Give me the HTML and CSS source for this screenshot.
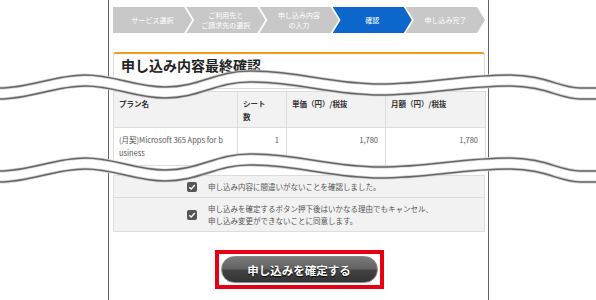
FILE: index.html
```html
<!DOCTYPE html>
<html lang="ja">
<head>
    <meta charset="UTF-8">
    <meta name="viewport" content="width=device-width, initial-scale=1.0">
    <title>申し込み内容最終確認</title>
    <link rel="stylesheet" href="styles.css">
</head>
<body>
    <div class="page">
        <ol class="steps">
            <li class="step">サービス選択</li>
            <li class="step">ご利用先と<br>ご請求先の選択</li>
            <li class="step">申し込み内容<br>の入力</li>
            <li class="step current">確認</li>
            <li class="step">申し込み完了</li>
        </ol>

        <div class="card">
            <h2>申し込み内容最終確認</h2>
        </div>

        <table class="plan-table">
            <colgroup>
                <col class="col-name">
                <col class="col-seat">
                <col class="col-price">
                <col class="col-month">
            </colgroup>
            <thead>
                <tr>
                    <th>プラン名</th>
                    <th>シート<br>数</th>
                    <th>単価（円）/税抜</th>
                    <th>月額（円）/税抜</th>
                </tr>
            </thead>
            <tbody>
                <tr>
                    <td class="name">(月契)Microsoft 365 Apps for business</td>
                    <td class="num">1</td>
                    <td class="num">1,780</td>
                    <td class="num">1,780</td>
                </tr>
            </tbody>
        </table>

        <div class="agree">
            <label class="agree-row">
                <span class="check"><svg viewBox="0 0 10 10"><path d="M2.3 5.2 L4.2 7.1 L7.8 3" /></svg></span>
                <span class="agree-text">申し込み内容に間違いがないことを確認しました。</span>
            </label>
            <label class="agree-row">
                <span class="check"><svg viewBox="0 0 10 10"><path d="M2.3 5.2 L4.2 7.1 L7.8 3" /></svg></span>
                <span class="agree-text">申し込みを確定するボタン押下後はいかなる理由でもキャンセル、<br>申し込み変更ができないことに同意します。</span>
            </label>
        </div>

        <div class="submit-area">
            <div class="highlight">
                <button type="button" class="submit">申し込みを確定する</button>
            </div>
        </div>
    </div>

    <!-- 省略線（画面の途中をカットした波線） -->
    <svg class="cut" width="596" height="300" viewBox="0 0 596 300">
        <defs>
            <path id="wave" fill="none" d="M0,88 C30,88 55,75 85,75 C115,75 135,87 165,87 C200,87 215,71 250,71 C300,71 330,84 380,84 C430,84 460,75 510,75 C545,75 560,88 580,88 L596,88" />
        </defs>
        <g>
            <use href="#wave" transform="translate(0,5.5)" stroke="#fff" stroke-width="11" />
            <use href="#wave" stroke="#d4d4d4" stroke-width="3.2" />
            <use href="#wave" transform="translate(0,11)" stroke="#d4d4d4" stroke-width="3.2" />
            <use href="#wave" stroke="#666" stroke-width="1.5" />
            <use href="#wave" transform="translate(0,11)" stroke="#666" stroke-width="1.5" />
        </g>
        <g transform="translate(0,83)">
            <use href="#wave" transform="translate(0,5.5)" stroke="#fff" stroke-width="11" />
            <use href="#wave" stroke="#d4d4d4" stroke-width="3.2" />
            <use href="#wave" transform="translate(0,11)" stroke="#d4d4d4" stroke-width="3.2" />
            <use href="#wave" stroke="#666" stroke-width="1.5" />
            <use href="#wave" transform="translate(0,11)" stroke="#666" stroke-width="1.5" />
        </g>
    </svg>
</body>
</html>
```

FILE: styles.css
```css
* {
    margin: 0;
    padding: 0;
    box-sizing: border-box;
}
body {
    font-family: "Noto Sans CJK JP", "Noto Sans", sans-serif;
    background: #fff;
    color: #333;
    position: relative;
    min-height: 300px;
}
.page {
    margin-left: 108px;
    width: 381px;
    min-height: 300px;
    border-left: 1px solid #666;
    border-right: 1px solid #666;
    padding: 7px 3px 0 4px;
}

/* ステップ表示 */
.steps {
    list-style: none;
    display: flex;
    height: 26px;
}
.step {
    flex: 1 1 0;
    margin-left: -6px;
    padding: 0 8px;
    display: flex;
    align-items: center;
    justify-content: center;
    text-align: center;
    background: #c8c8c8;
    color: #fff;
    font-size: 7px;
    line-height: 10px;
    clip-path: polygon(0 0, calc(100% - 8px) 0, 100% 50%, calc(100% - 8px) 100%, 0 100%, 8px 50%);
}
.step:first-child {
    margin-left: 0;
    clip-path: polygon(0 0, calc(100% - 8px) 0, 100% 50%, calc(100% - 8px) 100%, 0 100%);
}
.step.current {
    background: #0d66cc;
}

/* 見出しカード */
.card {
    margin-top: 19px;
    border: 1px solid #ddd;
    border-top: 2px solid #f39a1e;
    border-radius: 3px 3px 0 0;
    padding: 2px 7px 14px;
}
.card h2 {
    font-size: 14px;
    line-height: 18px;
    font-weight: 700;
    color: #222;
}

/* プラン表 */
.plan-table {
    width: 100%;
    margin-top: 2px;
    border-collapse: collapse;
    table-layout: fixed;
    border: 1px solid #ddd;
}
.col-name { width: 124px; }
.col-seat { width: 49px; }
.col-price { width: 99px; }
.col-month { width: 100px; }
.plan-table th,
.plan-table td {
    border: 1px solid #ddd;
    vertical-align: top;
    font-size: 7.5px;
    line-height: 12.5px;
}
.plan-table th {
    background: #f2f2f2;
    color: #333;
    font-weight: 700;
    text-align: left;
    padding: 6px 5px 4px;
}
.plan-table td {
    color: #555;
    padding: 6px 5px;
}
.plan-table td.name {
    padding-right: 13px;
    word-break: break-all;
}
.plan-table td.num {
    text-align: right;
    padding-right: 7px;
}

/* 同意チェック */
.agree {
    margin-top: 9px;
    background: #f2f2f2;
    border: 1px solid #ddd;
}
.agree-row {
    display: flex;
    align-items: center;
    gap: 11px;
    padding: 4.5px 0 4.5px 73px;
    font-size: 7.5px;
    line-height: 12px;
    color: #555;
}
.agree-row + .agree-row {
    border-top: 1px solid #ddd;
}
.check {
    flex: none;
    width: 10px;
    height: 10px;
    border-radius: 2px;
    background: #555;
    display: flex;
}
.check svg {
    width: 10px;
    height: 10px;
    fill: none;
    stroke: #fff;
    stroke-width: 1.4;
}

/* 確定ボタン */
.submit-area {
    margin-top: 18px;
    display: flex;
    justify-content: center;
}
.highlight {
    border: 4px solid #e60012;
    padding: 2px;
}
.submit {
    display: block;
    width: 157px;
    height: 27px;
    border: 1px solid #888;
    border-radius: 14px;
    background: linear-gradient(#7a7a7a 0%, #626262 48%, #444 52%, #333 100%);
    color: #fff;
    font-family: inherit;
    font-size: 11.5px;
    font-weight: 700;
    text-shadow: 0 1px 1px #000;
    cursor: pointer;
}

/* 波線 */
.cut {
    position: absolute;
    top: 0;
    left: 0;
    pointer-events: none;
}
```
